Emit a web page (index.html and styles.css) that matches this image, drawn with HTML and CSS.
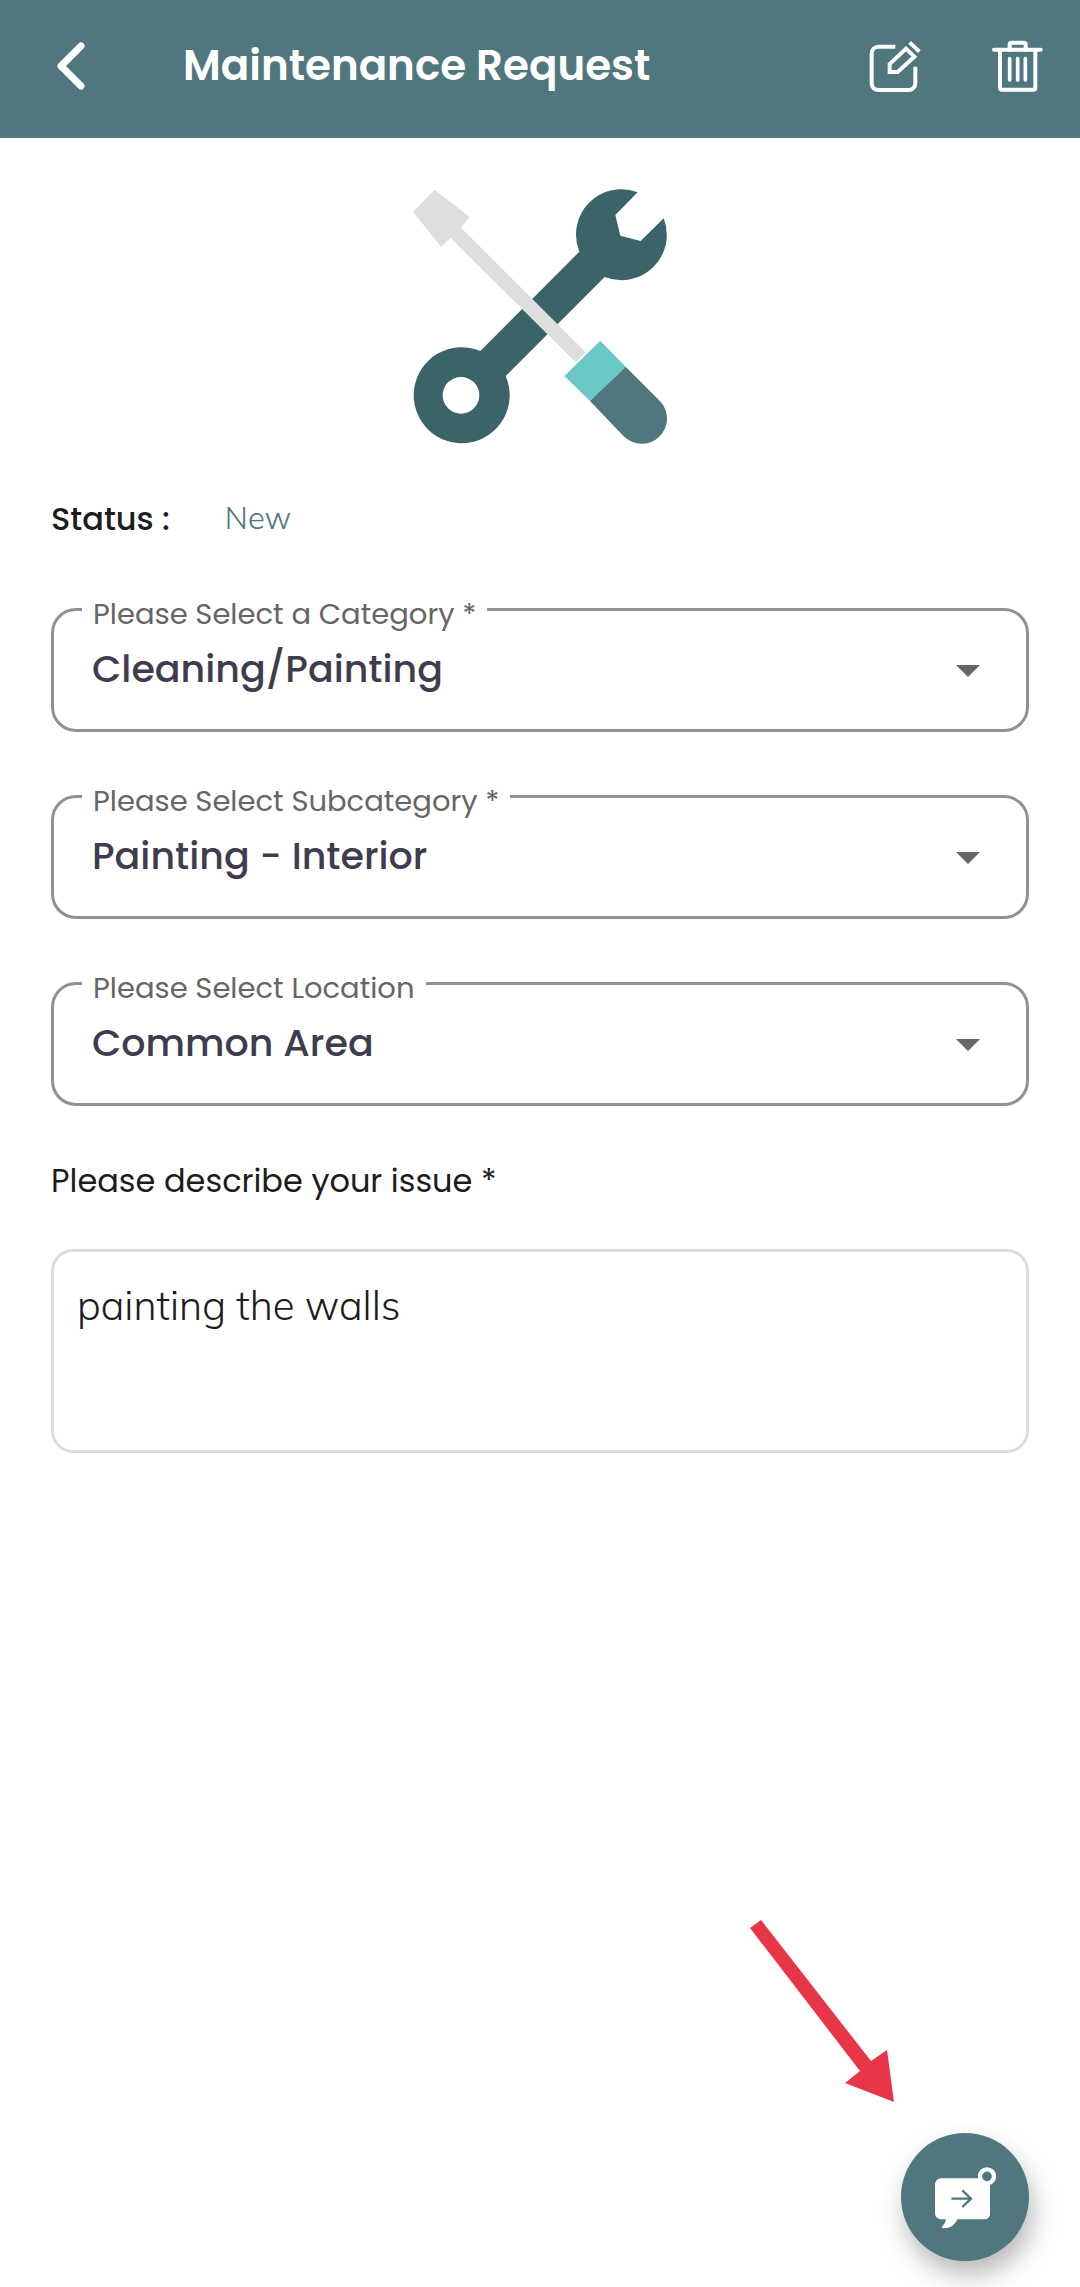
FILE: index.html
```html
<!DOCTYPE html>
<html lang="en">
<head>
  <meta charset="utf-8">
  <meta name="viewport" content="width=device-width, initial-scale=1">
  <title>Maintenance Request</title>
  <link rel="stylesheet" href="styles.css">
</head>
<body>
  <header class="app-bar">
    <button class="icon-button" type="button" aria-label="Back">
      <svg class="icon-back" viewBox="0 0 28 48" aria-hidden="true">
        <path d="M24 4 4 24 24 44" fill="none" stroke="currentColor" stroke-width="7" stroke-linecap="round" stroke-linejoin="round"/>
      </svg>
    </button>
    <h1 class="app-title">Maintenance Request</h1>
    <div class="app-actions">
      <button class="icon-button" type="button" aria-label="Edit request">
        <svg class="icon-action" viewBox="120 118 156 156" aria-hidden="true">
          <g fill="none" stroke="currentColor" stroke-width="12">
            <path d="M199 138H148a20 20 0 0 0-20 20v90a20 20 0 0 0 20 20h91a20 20 0 0 0 20-20v-50"/>
            <path d="M231 144 256 168 206 214H182V190Z"/>
            <path d="M242 125 271 153"/>
          </g>
        </svg>
      </button>
      <button class="icon-button" type="button" aria-label="Delete request">
        <svg class="icon-action" viewBox="486 118 156 156" aria-hidden="true">
          <g fill="none" stroke="currentColor" stroke-width="12" stroke-linecap="round">
            <path d="M495 147H635"/>
            <path d="M513 147V261a6 6 0 0 0 6 6H613a6 6 0 0 0 6-6V147"/>
            <path d="M542 147V131a5 5 0 0 1 5-5H585a5 5 0 0 1 5 5V147"/>
            <path d="M542 174V238M566 174V238M589 174V238" stroke-width="11"/>
          </g>
        </svg>
      </button>
    </div>
  </header>

  <main class="request">
    <svg class="tools" viewBox="39 27 762 765" role="img" aria-label="Wrench and screwdriver">
      <path fill="#3a6468" fill-rule="evenodd" d="M713 37 646 105 661 167 722 183 791 115A136 136 0 0 1 614 291L317 588A144 144 0 1 1 241 513L538 215A136 136 0 0 1 713 37ZM183 591a55 55 0 1 0 0 110a55 55 0 1 0 0-110Z"/>
      <path fill="#dedede" d="M104 29 209 111 183 143 557 517 527 547 152 174 123 200 39 95Z"/>
      <path fill="#6ac8c6" d="M601 482 677 560 570 663 493 588Z"/>
      <path fill="#4f777d" d="M677 560 779 662A76 76 0 0 1 671 769L570 663Z"/>
    </svg>

    <dl class="status">
      <dt class="status-name">Status :</dt>
      <dd class="status-value">New</dd>
    </dl>

    <form class="fields">
      <div class="field">
        <label class="field-label" for="category">Please Select a Category *</label>
        <select class="field-select" id="category">
          <option>Cleaning/Painting</option>
        </select>
        <svg class="field-arrow" viewBox="0 0 24 12" aria-hidden="true"><path d="M0 0H24L12 12Z" fill="currentColor"/></svg>
      </div>
      <div class="field">
        <label class="field-label" for="subcategory">Please Select Subcategory *</label>
        <select class="field-select" id="subcategory">
          <option>Painting - Interior</option>
        </select>
        <svg class="field-arrow" viewBox="0 0 24 12" aria-hidden="true"><path d="M0 0H24L12 12Z" fill="currentColor"/></svg>
      </div>
      <div class="field">
        <label class="field-label" for="location">Please Select Location</label>
        <select class="field-select" id="location">
          <option>Common Area</option>
        </select>
        <svg class="field-arrow" viewBox="0 0 24 12" aria-hidden="true"><path d="M0 0H24L12 12Z" fill="currentColor"/></svg>
      </div>
      <div class="issue">
        <label class="issue-label" for="issue">Please describe your issue *</label>
        <textarea class="issue-text" id="issue">painting the walls</textarea>
      </div>
    </form>
  </main>

  <svg class="pointer" viewBox="0 0 144 182" aria-hidden="true">
    <path fill="#e93548" d="M0 8 11 0 121 141 137 130 144 182 95 163 110 151Z"/>
  </svg>
  <button class="chat-button" type="button" aria-label="Send a message">
    <svg class="icon-chat" viewBox="129 134 189 189" aria-hidden="true">
      <path fill="#fff" d="M150 171H282a15 15 0 0 1 15 15V278a16 16 0 0 1-16 16H199C192 312 176 322 155 321Q150 319 154 315Q163 307 165 294H150a18 18 0 0 1-18-18V189a18 18 0 0 1 18-18Z"/>
      <circle cx="288" cy="165" r="21" fill="#4f777d" stroke="#fff" stroke-width="13"/>
      <path d="M181 232H240M214 207 240 232 214 257" fill="none" stroke="#4f777d" stroke-width="7"/>
    </svg>
  </button>
</body>
</html>
```
FILE: styles.css
```css
* {
  box-sizing: border-box;
}

body {
  position: relative;
  min-height: 100vh;
  margin: 0;
  background: #fff;
  color: #1c1c1c;
  font-family: Poppins, Inter, sans-serif;
}

.app-bar {
  display: flex;
  align-items: center;
  padding: 40px 37px 46px 57px;
  background: #4f777d;
  color: #fff;
}

.icon-button {
  display: flex;
  padding: 0;
  border: 0;
  background: none;
  color: inherit;
}

.icon-back {
  width: 28px;
  height: 48px;
}

.icon-action {
  width: 52px;
  height: 52px;
}

.app-title {
  flex: 1;
  margin: 0 0 0 98px;
  font-size: 42px;
  font-weight: 600;
  line-height: 48px;
}

.app-actions {
  display: flex;
  gap: 70px;
}

.request {
  padding: 51px 51px 160px;
}

.tools {
  display: block;
  width: 254px;
  height: 255px;
  margin: 0 auto;
}

.status {
  display: flex;
  gap: 55px;
  margin: 53px 0 67px;
  font-size: 32px;
  line-height: 44px;
}

.status-name {
  font-weight: 500;
}

.status-value {
  margin: 0;
  color: #4f777d;
  font-family: Mulish, Lato, sans-serif;
  font-size: 31px;
  font-weight: 300;
  line-height: 42px;
}

.fields {
  display: flex;
  flex-direction: column;
  gap: 63px;
}

.field {
  position: relative;
}

.field-label {
  position: absolute;
  top: -12px;
  left: 31px;
  padding: 0 11px;
  background: #fff;
  color: #666;
  font-size: 29px;
  line-height: 36px;
}

.field-select {
  display: block;
  width: 100%;
  height: 124px;
  padding: 0 96px 4px 38px;
  border: 3px solid #919191;
  border-radius: 25px;
  appearance: none;
  background: none;
  color: #403c4f;
  font: inherit;
  font-size: 38px;
  font-weight: 500;
}

.field-arrow {
  position: absolute;
  top: 57px;
  right: 49px;
  width: 24px;
  height: 12px;
  color: #666;
  pointer-events: none;
}

.issue {
  display: flex;
  flex-direction: column;
  gap: 46px;
  margin-top: -10px;
}

.issue-label {
  font-size: 32px;
  line-height: 44px;
}

.issue-text {
  display: block;
  width: 100%;
  height: 204px;
  padding: 28px 23px;
  border: 3px solid #dcdcdc;
  border-radius: 22px;
  background: none;
  color: #1c1c1c;
  font-family: Mulish, Lato, sans-serif;
  font-size: 40px;
  font-weight: 300;
  line-height: 50px;
  resize: none;
}

.pointer {
  position: absolute;
  right: 186px;
  bottom: 185px;
  width: 144px;
  height: 182px;
}

.chat-button {
  position: absolute;
  right: 51px;
  bottom: 26px;
  display: flex;
  align-items: center;
  justify-content: center;
  width: 128px;
  height: 128px;
  padding: 0;
  border: 0;
  border-radius: 50%;
  background: #4f777d;
  box-shadow: 4px 14px 26px rgb(0 0 0 / 28%);
}

.icon-chat {
  width: 63px;
  height: 63px;
}
```
